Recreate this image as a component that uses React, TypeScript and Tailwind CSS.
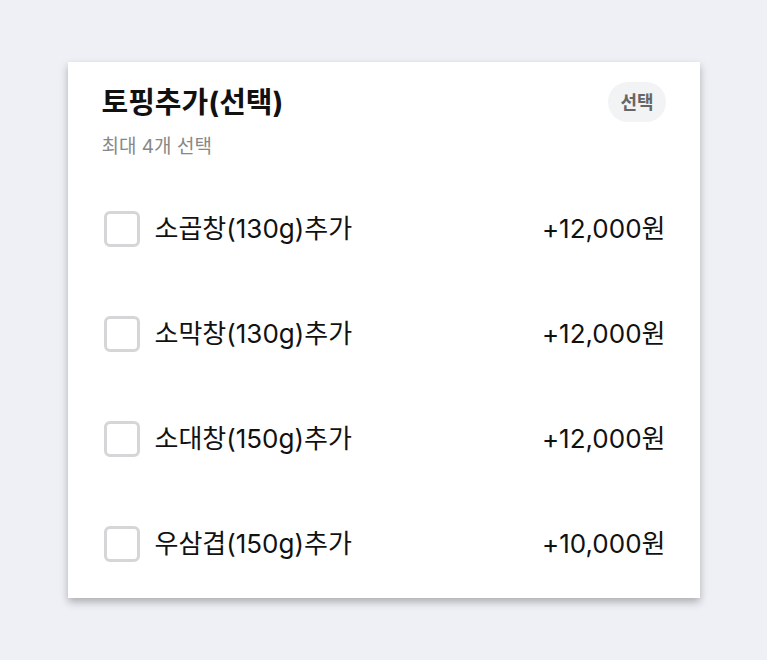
const options = [
  { name: '소곱창(130g)추가', price: '+12,000원' },
  { name: '소막창(130g)추가', price: '+12,000원' },
  { name: '소대창(150g)추가', price: '+12,000원' },
  { name: '우삼겹(150g)추가', price: '+10,000원' },
];

export default function App() {
  return (
    <div className="min-h-[660px] bg-[#eef0f5] pt-[62px] font-['Inter','Noto_Sans_CJK_KR',sans-serif]">
      <div className="mx-auto w-[632px] bg-white pl-[34px] pr-[34px] pt-[20px] pb-[2px] shadow-[0_4px_8px_rgba(0,0,0,0.28)]">
        <div className="flex h-[40px] items-center justify-between">
          <h2 className="text-[29px] font-bold text-[#111] leading-none">토핑추가(선택)</h2>
          <span className="flex h-[40px] items-center rounded-full bg-[#f2f3f5] px-[12px] text-[18px] font-bold text-[#666]">선택</span>
        </div>
        <p className="mt-[12px] text-[19px] leading-[26px] text-[#888]">최대 4개 선택</p>
        <div className="mt-[16px]">
          {options.map((o) => (
            <div key={o.name} className="flex h-[105px] items-center justify-between">
              <div className="flex items-center gap-[15px]">
                <span className="ml-[2px] h-[36px] w-[36px] rounded-[6px] border-[3px] border-[#d6d6d8] bg-white" />
                <span className="text-[26px] text-[#111]">{o.name}</span>
              </div>
              <span className="text-[26px] text-[#111]">{o.price}</span>
            </div>
          ))}
        </div>
      </div>
    </div>
  );
}
